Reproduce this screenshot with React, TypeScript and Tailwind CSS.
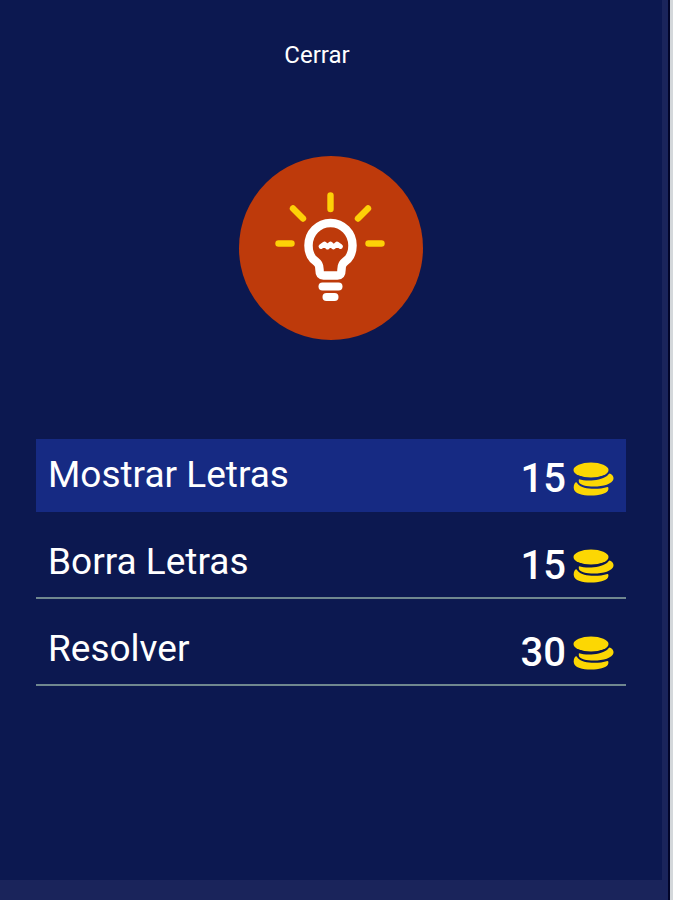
import React, { useState } from "react";

const hints = [
	{ id: "show", label: "Mostrar Letras", price: 15 },
	{ id: "erase", label: "Borra Letras", price: 15 },
	{ id: "solve", label: "Resolver", price: 30 },
];

const Coins = () => (
	<svg viewBox="0 0 42 36" fill="#fcd703" className="w-[42px] h-9 shrink-0">
		<ellipse cx="19" cy="9" rx="17.5" ry="7.5" />
		<path d="M7 18.2C14 20.5 28 20 35 15C36.5 13.8 36.8 12.5 37.8 12.5C40.5 13.5 41.8 15.5 41.5 18C40.5 23 31 25.5 22 25.5C14.5 25.5 8 24 7 21.2C6.7 20 6.7 18.8 7 18.2Z" />
		<path d="M3.8 21.3C4.8 20.7 5 22 6 23.2C10 28.2 25 29.2 35.5 26C36.8 25.7 36.5 28.2 36 29.5C34 33 27 34.5 19 34.5C10 34.5 3.5 32.5 2 28.5C1.2 26 2 22.5 3.8 21.3Z" />
	</svg>
);

const Bulb = () => (
	<svg
		viewBox="0 0 184 184"
		fill="none"
		strokeLinecap="round"
		strokeLinejoin="round"
		className="w-[184px] h-[184px]"
	>
		<circle cx="92" cy="92" r="92" fill="#be3a0b" />
		<g stroke="#fdd107" strokeWidth="6.4">
			<path d="M91.5 39.5V53" />
			<path d="M54 52.5L64 62.5" />
			<path d="M129 52.5L119 62.5" />
			<path d="M39.5 87.5H52.5" />
			<path d="M129.5 87.5H142.5" />
		</g>
		<g stroke="#ffffff">
			<path
				strokeWidth="8.5"
				d="M80.5 113.5C80.5 107 77.5 106.5 74 103C70.5 99 69.5 94 69.5 89.5A22 22.5 0 0 1 113.5 89.5C113.5 94 112.5 99 109 103C105.500 106.5 102.5 107 102.5 113.5C102.5 117.5 101.5 119.5 98.5 119.5H84.5C81.5 119.5 80.5 117.5 80.5 113.5Z"
			/>
			<path
				strokeWidth="4.8"
				d="M82 90.5L85.5 88L88.5 91L91.5 88L94.5 91L98 88L101.5 90.5"
			/>
			<path strokeWidth="8" d="M83.5 130.5H99.5" />
			<path strokeWidth="8" d="M87.5 141H95.5" />
		</g>
	</svg>
);

const App = () => {
	const [selected, setSelected] = useState("show");
	const [open, setOpen] = useState(true);

	return (
		<div className="min-h-screen flex bg-[#d3d7da] pr-[3px] font-['Roboto',sans-serif] text-white">
			<div className="flex-1 flex border-r-2 border-[#02052a] bg-[#1a245b] pr-1.5 pb-5">
				{open && (
					<main className="flex-1 flex flex-col items-center bg-[#0c1850] px-9 pt-[39px]">
						<button
							onClick={() => setOpen(false)}
							className="text-2xl leading-8 px-4 mr-7"
						>
							Cerrar
						</button>
						<div className="mt-[85px]">
							<Bulb />
						</div>
						<ul className="w-full mt-[99px] flex flex-col gap-3.5">
							{hints.map((hint) => (
								<li key={hint.id}>
									<button
										onClick={() => setSelected(hint.id)}
										className={
											selected === hint.id
												? "w-full h-[73px] flex items-center justify-between px-3 border-b-2 border-[#162a83] bg-[#162a83]"
												: "w-full h-[73px] flex items-center justify-between px-3 border-b-2 border-[#70878f]"
										}
									>
										<span className="text-[37px] leading-10">{hint.label}</span>
										<span className="flex items-center gap-1.5 pt-2 text-[40px] leading-10 font-medium">
											{hint.price}
											<Coins />
										</span>
									</button>
								</li>
							))}
						</ul>
					</main>
				)}
			</div>
		</div>
	);
};

export default App;
